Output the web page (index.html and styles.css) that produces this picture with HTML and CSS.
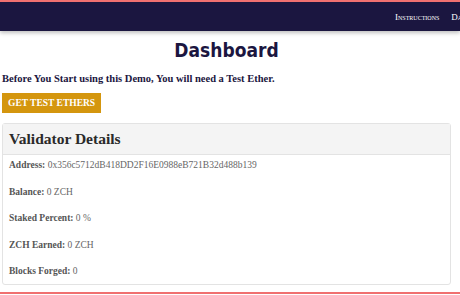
FILE: index.html
```html
<!DOCTYPE html>
<html lang="en">
<head>
  <meta charset="UTF-8" />
  <title>Dashboard</title>
  <link rel="stylesheet" href="styles.css">
</head>
<body>
  <nav class="navbar">
    <div class="nav-links">
      <a href="#">Instructions</a>
      <a href="#">Dashboard</a>
    </div>
  </nav>

  <main class="container">
    <h1>Dashboard</h1>
    <p class="intro">Before You Start using this Demo, You will need a Test Ether.</p>
    <button class="btn-ether">GET TEST ETHERS</button>

    <div class="card">
      <div class="card-header">Validator Details</div>
      <div class="card-body">
        <p><b>Address:</b> 0x356c5712dB418DD2F16E0988eB721B32d488b139</p>
        <p><b>Balance:</b> 0 ZCH</p>
        <p><b>Staked Percent:</b> 0 %</p>
        <p><b>ZCH Earned:</b> 0 ZCH</p>
        <p><b>Blocks Forged:</b> 0</p>
      </div>
    </div>
  </main>

  <footer class="footer"></footer>
</body>
</html>
```

FILE: styles.css
```css
html, body {
  overflow: hidden;
}
body {
  margin: 0;
  height: 293px;
  font-family: "Liberation Serif", serif;
  background: #fff;
  color: #1b1640;
  border-top: 2px solid #f07070;
}
.navbar {
  background: #1b1640;
  height: 29px;
  display: flex;
  align-items: center;
  box-shadow: 0 2px 4px rgba(0,0,0,0.25);
  white-space: nowrap;
  overflow: hidden;
}
.nav-links {
  display: flex;
  flex-shrink: 0;
  gap: 12px;
  margin-left: 395px;
}
.nav-links a {
  color: #fff;
  text-decoration: none;
  font-family: "Liberation Serif", serif;
  font-variant: small-caps;
  font-size: 9px;
}
.container {
  padding: 0 9px 0 2px;
}
h1 {
  font-family: "DejaVu Sans", sans-serif;
  font-stretch: condensed;
  font-weight: 900;
  font-size: 19px;
  line-height: 22px;
  text-align: center;
  margin: 8px 0 12px;
  color: #1b1640;
}
.intro {
  font-size: 10.5px;
  font-weight: bold;
  margin: 0 0 8px;
  color: #1b1640;
}
.btn-ether {
  background: #d4960e;
  color: #fff;
  border: none;
  font-family: "Liberation Serif", serif;
  font-weight: bold;
  font-size: 9.5px;
  height: 20px;
  padding: 0 6px;
  margin-bottom: 10px;
}
.card {
  border: 1px solid #e3e3e3;
  border-radius: 3px;
}
.card-header {
  background: #f4f4f4;
  border-bottom: 1px solid #e3e3e3;
  font-weight: bold;
  font-size: 15.5px;
  line-height: 18px;
  padding: 6px 6px 6px;
  color: #2a2a2a;
}
.card-body {
  padding: 5px 6px 8px;
}
.card-body p {
  font-size: 9.5px;
  color: #666;
  margin: 0 0 16.5px;
  line-height: 10px;
}
.card-body p:last-child {
  margin-bottom: 0;
}
.card-body b {
  color: #555;
}
.footer {
  border-top: 2px solid #f07070;
  margin-top: 7px;
  height: 20px;
}
```
